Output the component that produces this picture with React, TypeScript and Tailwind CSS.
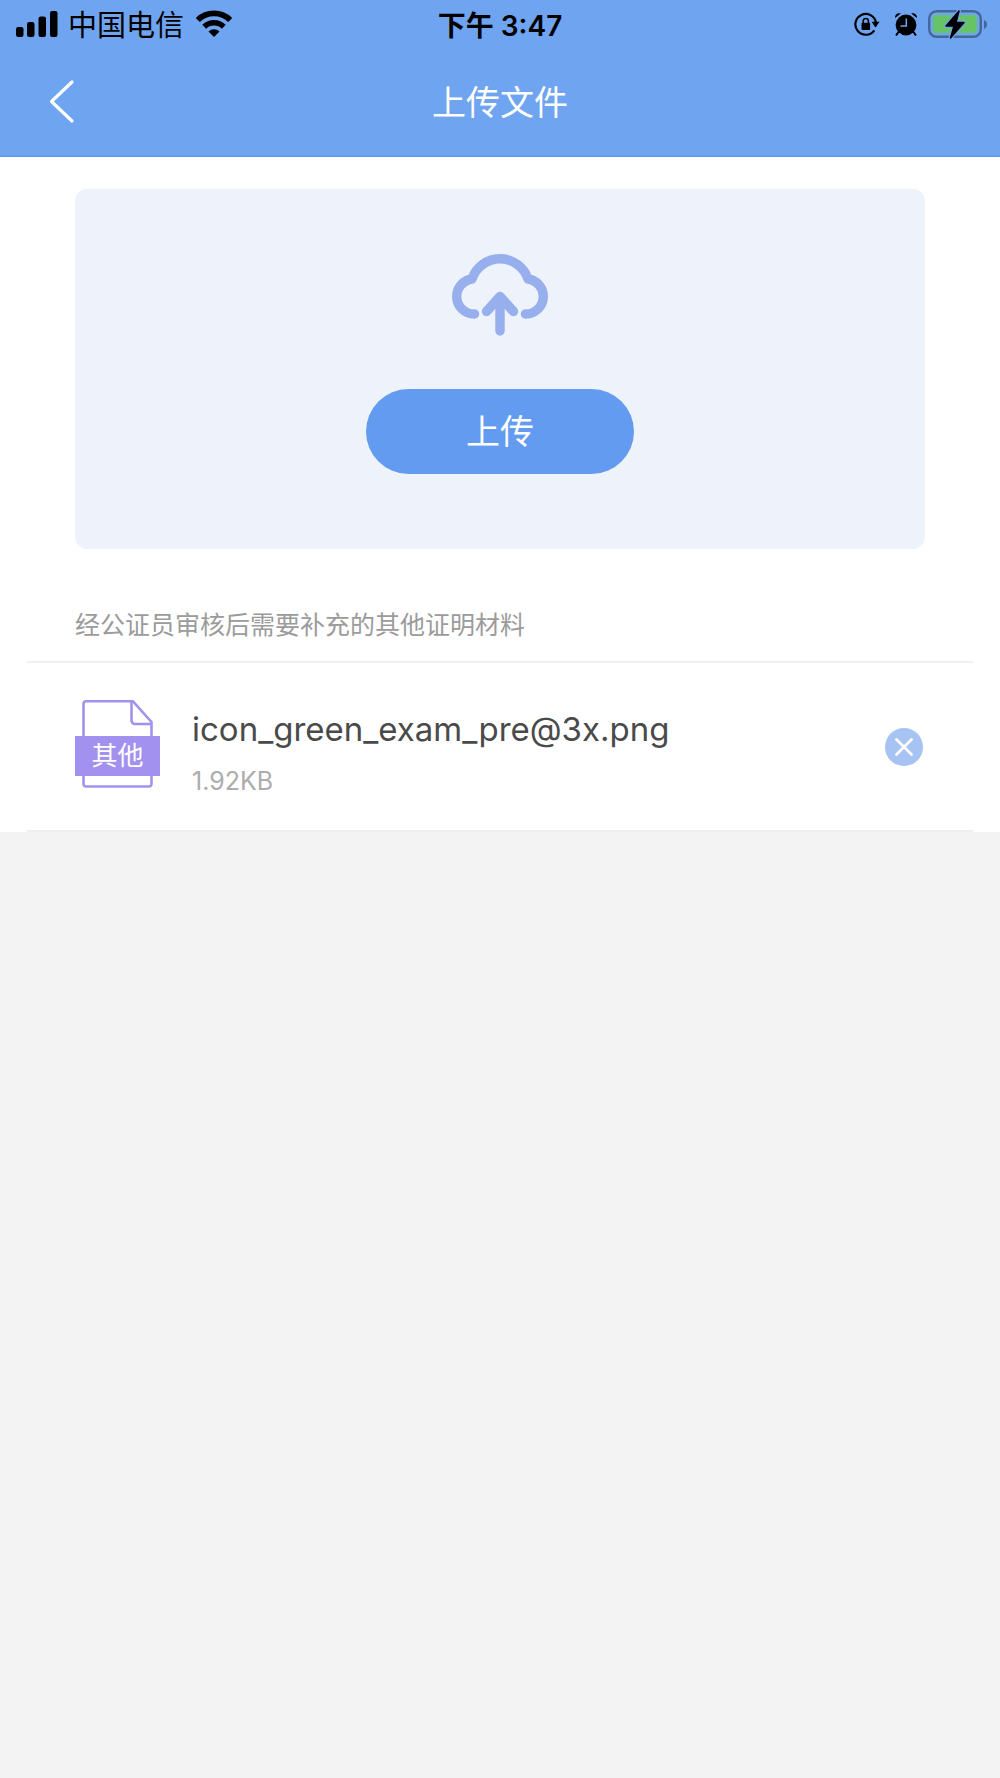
import React, { useState } from "react";

function SignalIcon() {
  return (
    <svg className="h-7 w-[42px]" viewBox="0 0 42 28" aria-label="信号">
      <rect x="0" y="17" width="7.500" height="10" rx="2.200" />
      <rect x="11" y="12" width="7.500" height="15" rx="2.200" />
      <rect x="22.500" y="6.500" width="7.500" height="20.500" rx="2.200" />
      <rect x="34" y="1" width="7.500" height="26" rx="2.200" />
    </svg>
  );
}

function WifiIcon() {
  return (
    <svg className="ml-0.5 h-7 w-9" viewBox="0 0 36 28" fill="none" stroke="black" aria-label="无线网络">
      <path d="M1.800 10a23.200 23.200 0 0 1 32.400 0" strokeWidth="5.800" />
      <path d="M8.200 16.700a14 14 0 0 1 19.600 0" strokeWidth="5.500" />
      <path d="M18 27l-5.500-5.500a8 8 0 0 1 11 0z" fill="black" stroke="none" />
    </svg>
  );
}

function RotationLockIcon() {
  return (
    <svg className="h-6 w-[26px]" viewBox="0 0 26 24" fill="none" stroke="black" aria-label="方向锁定">
      <path d="M20.300 18.300A10.400 10.400 0 1 1 22 10.500" strokeWidth="2.200" />
      <path d="M17.500 9.800h8l-4 5.700z" fill="black" stroke="none" />
      <rect x="7.500" y="10.800" width="8.600" height="7.200" rx="1" fill="black" stroke="none" />
      <path d="M9.200 11.500V9a2.600 2.600 0 0 1 5.200 0v2.500" strokeWidth="1.500" />
    </svg>
  );
}

function AlarmIcon() {
  return (
    <svg className="h-6 w-6" viewBox="0 0 24 24" aria-label="闹钟">
      <circle cx="12" cy="13" r="10.400" />
      <path
        d="M1.200 6C.4 3 3.500.3 6.800 1.500zM22.800 6C23.600 3 20.500.3 17.200 1.500z"
        stroke="#6fa4f0"
        strokeWidth="1"
        paintOrder="stroke"
      />
      <path d="M4.500 20l-2 2.800M19.500 20l2 2.800" stroke="black" strokeWidth="2" strokeLinecap="round" />
      <path d="M12.300 6.500V14H6.500" fill="none" stroke="#6fa4f0" strokeWidth="1.500" />
    </svg>
  );
}

function BatteryIcon() {
  return (
    <svg className="h-8 w-15" viewBox="0 0 60 32" aria-label="正在充电">
      <rect x="1.200" y="3.200" width="51.600" height="25.600" rx="7.500" fill="none" stroke="#456797" strokeWidth="2.400" />
      <rect x="5" y="7" width="44" height="18" rx="3.500" fill="#66c466" />
      <path d="M56 12v9c1.800-.8 3-2.600 3-4.500S57.800 12.800 56 12z" fill="#456797" />
      <path
        d="M31 3L18 18h8l-3.500 12L36 14.500h-8z"
        stroke="#6fa4f0"
        strokeWidth="4"
        strokeLinejoin="round"
      />
      <path d="M31 3L18 18h8l-3.500 12L36 14.500h-8z" stroke="black" strokeWidth="1.500" strokeLinejoin="round" />
    </svg>
  );
}

function CloudUploadIcon() {
  return (
    <svg
      className="h-21 w-24"
      viewBox="0 0 96 84"
      fill="none"
      stroke="#98afee"
      strokeWidth="9.400"
      strokeLinecap="round"
      strokeLinejoin="round"
      aria-hidden="true"
    >
      <path d="M22.500 61A17.500 17.500 0 0 1 4.700 43.500A17.500 17.500 0 0 1 20 26A29.500 29.500 0 0 1 76 26A17.500 17.500 0 0 1 91.300 43.500A17.500 17.500 0 0 1 73.500 61" />
      <path d="M48 78V43.500M34.500 58.500L48 43.500l13.500 15" />
    </svg>
  );
}

function FileIcon() {
  return (
    <div className="relative mt-[37px] h-22 w-[85px] shrink-0 self-start pt-9">
      <svg
        className="absolute inset-0 h-full w-full"
        viewBox="0 0 85 88"
        fill="none"
        stroke="#a291ee"
        strokeWidth="2.600"
        strokeLinejoin="round"
        aria-hidden="true"
      >
        <path d="M58 1.300H11a2.500 2.500 0 0 0-2.500 2.500V84a2.500 2.500 0 0 0 2.500 2.500h63a2.500 2.500 0 0 0 2.500-2.500V22z" />
        <path d="M56.500 2v18.500a3.500 3.500 0 0 0 3.500 3.500h16" />
      </svg>
      <span className="relative block h-10 w-full bg-[#a291ee] text-center text-[26px] leading-10 text-white">
        其他
      </span>
    </div>
  );
}

const initialFiles = [{ name: "icon_green_exam_pre@3x.png", size: "1.92KB" }];

export default function App() {
  const [files, setFiles] = useState(initialFiles);

  return (
    <div className="min-h-screen bg-[#f3f3f3] font-['Inter','Noto_Sans_CJK_SC',sans-serif]">
      <header className="border-b-2 border-[#659bef] bg-[#6fa4f0]">
        <div className="grid h-12 grid-cols-[1fr_auto_1fr] items-center px-4">
          <div className="flex items-center gap-2.5">
            <SignalIcon />
            <span className="pt-1 text-[29px] leading-11 whitespace-nowrap">中国电信</span>
            <WifiIcon />
          </div>
          <time className="pt-1 text-[28px] leading-11 font-semibold whitespace-nowrap">下午 3:47</time>
          <div className="-mr-1 flex items-center justify-end gap-3.5">
            <RotationLockIcon />
            <AlarmIcon />
            <div className="-ml-1">
              <BatteryIcon />
            </div>
          </div>
        </div>
        <div className="grid grid-cols-[1fr_auto_1fr] items-center px-11">
          <button type="button" aria-label="返回" className="flex h-[107px] w-12 items-center">
            <svg
              className="h-12 w-8"
              viewBox="0 0 32 48"
              fill="none"
              stroke="white"
              strokeWidth="3.200"
              strokeLinecap="round"
              strokeLinejoin="round"
            >
              <path d="M28 4L7.500 23.500 28 43" />
            </svg>
          </button>
          <h1 className="pt-0.5 text-[34px] text-white">上传文件</h1>
        </div>
      </header>

      <main className="bg-white">
        <div className="px-[75px] pt-8">
          <section className="flex flex-col items-center rounded-xl bg-[#edf2fb] pt-16 pb-[75px]">
            <CloudUploadIcon />
            <button
              type="button"
              className="mt-[52px] h-[85px] w-[268px] rounded-full bg-[#639bf0] text-[34px] text-white"
            >
              上传
            </button>
          </section>
        </div>

        <section className="px-[27px]">
          <h2 className="border-b-2 border-[#f0f0f0] px-12 pt-14 pb-4 text-[25px] leading-10 text-[#9b9b9b]">
            经公证员审核后需要补充的其他证明材料
          </h2>
          <ul>
            {files.map((file) => (
              <li
                key={file.name}
                className="flex h-[169px] items-center border-b-2 border-[#efefef] pr-[50px] pl-12"
              >
                <FileIcon />
                <div className="ml-8 min-w-0 flex-1 pt-2">
                  <p className="truncate text-[33px] leading-12 text-[#4a4a4a]">{file.name}</p>
                  <p className="mt-3 text-[25px] leading-8 text-[#acacac]">{file.size}</p>
                </div>
                <button
                  type="button"
                  aria-label="删除"
                  onClick={() => setFiles(files.filter((f) => f !== file))}
                  className="flex size-[38px] items-center justify-center rounded-full bg-[#a6c3f3]"
                >
                  <svg className="size-5" viewBox="0 0 20 20" stroke="white" strokeWidth="2.800" strokeLinecap="round">
                    <path d="M2.500 2.500l15 15M17.500 2.500l-15 15" />
                  </svg>
                </button>
              </li>
            ))}
          </ul>
        </section>
      </main>
    </div>
  );
}
